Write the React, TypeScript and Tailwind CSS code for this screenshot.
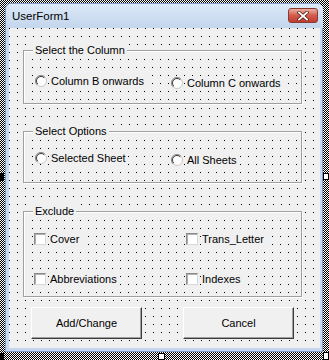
import React from "react";

const font = "font-['Liberation_Sans',Arial,sans-serif]";
const dots =
  "bg-[#f0f0f0] bg-[image:radial-gradient(circle_at_0.5px_0.5px,#000_0.8px,transparent_0.8px)] bg-[length:8px_8px]";

function Radio({ label, lower }: { label: string; lower?: boolean }) {
  return (
    <div className={`flex items-center gap-[4px] h-[14px] ${lower ? "mt-[2px]" : ""}`}>
      <svg width="12" height="12" viewBox="0 0 12 12" className="shrink-0">
        <circle cx="6" cy="6" r="5.5" fill="#fff" stroke="#c8c8c8" />
        <path d="M2.1 9.9 A5.5 5.5 0 0 1 9.9 2.1" fill="none" stroke="#8a8a8a" />
        <path d="M2.8 9.2 A4.5 4.5 0 0 1 9.2 2.8" fill="none" stroke="#3c3c3c" />
      </svg>
      <span className="text-[11px] leading-[14px] text-black bg-[#f0f0f0] pr-[2px]">{label}</span>
    </div>
  );
}

function Check({ label }: { label: string }) {
  return (
    <div className="flex items-center gap-[4px] h-[14px]">
      <div className="w-[12px] h-[12px] shrink-0 bg-white border border-[#8c8c8c] border-r-[#d8d8d8] border-b-[#d8d8d8] shadow-[inset_1px_1px_0_#b0b0b0]" />
      <span className="text-[11px] leading-[14px] text-black bg-[#f0f0f0] pr-[2px]">{label}</span>
    </div>
  );
}

function Frame({
  caption,
  className,
  children,
}: {
  caption: string;
  className: string;
  children: React.ReactNode;
}) {
  return (
    <div
      className={`relative w-[279px] border border-[#a0a0a0] shadow-[inset_1px_1px_0_#fff,1px_1px_0_#fff] ${dots} ${className}`}
    >
      <span className="absolute top-[-8px] left-[9px] px-[2px] bg-[#f0f0f0] text-[11px] leading-[14px] text-black">
        {caption}
      </span>
      {children}
    </div>
  );
}

function Button({ label }: { label: string }) {
  return (
    <button className="w-[111px] h-[32px] bg-[#f0f0f0] border border-t-white border-l-white border-r-[#3a3a3a] border-b-[#3a3a3a] shadow-[inset_-1px_-1px_0_#a0a0a0] text-[11px] text-black">
      {label}
    </button>
  );
}

export default function App() {
  return (
    <div
      className={`relative w-[329px] h-[360px] overflow-hidden pt-[3px] pl-[5px] bg-[image:repeating-conic-gradient(#000_0%_25%,#fff_0%_50%)] bg-[length:2px_2px] ${font}`}
    >
      {/* window */}
      <div className="w-[318px] h-[349px] flex flex-col rounded-t-[6px] border border-[#7f9dc4] bg-[#c4d7ee] pl-[3px] pr-[2px] pb-[3px]">
        <div className="h-[24px] shrink-0 flex items-start justify-between pr-[3px] -mx-[3px] pl-[6px] rounded-t-[5px] bg-linear-to-b from-[#dce8f6] to-[#c3d6ed]">
          <span className="mt-[4px] text-[11.5px] leading-[16px] text-black">UserForm1</span>
          <div className="mt-[4px] mr-[2px] w-[30px] h-[15px] flex items-center justify-center rounded-[3px] border border-[#8a3a30] bg-linear-to-b from-[#eab0a4] via-[#d25a4c] to-[#c23b2d]">
            <svg width="12" height="10" viewBox="0 0 12 10">
              <path d="M2 1.5 L10 8.5 M10 1.5 L2 8.5" stroke="#5a2018" strokeWidth="3.4" strokeLinecap="square" />
              <path d="M2 1.5 L10 8.5 M10 1.5 L2 8.5" stroke="#fff" strokeWidth="1.8" strokeLinecap="square" />
            </svg>
          </div>
        </div>

        {/* client area */}
        <div className={`w-[311px] h-[320px] flex flex-col pl-[14px] pt-[22px] ${dots}`}>
          <Frame caption="Select the Column" className="h-[54px] pt-[23px] pl-[11px]">
            <div className="grid grid-cols-[136px_1fr] items-start">
              <Radio label="Column B onwards" />
              <Radio label="Column C onwards" lower />
            </div>
          </Frame>

          <Frame caption="Select Options" className="mt-[27px] h-[52px] pt-[19px] pl-[11px]">
            <div className="grid grid-cols-[136px_1fr] items-start">
              <Radio label="Selected Sheet" />
              <Radio label="All Sheets" lower />
            </div>
          </Frame>

          <Frame caption="Exclude" className="mt-[28px] h-[86px] pt-[20px] pl-[10px]">
            <div className="grid grid-cols-[152px_1fr] gap-y-[26px]">
              <Check label="Cover" />
              <Check label="Trans_Letter" />
              <Check label="Abbreviations" />
              <Check label="Indexes" />
            </div>
          </Frame>

          <div className="mt-[10px] ml-[8px] flex gap-[41px]">
            <Button label="Add/Change" />
            <Button label="Cancel" />
          </div>
        </div>
      </div>

      {/* selection handles */}
      <div className="absolute left-0 top-[173px] w-[4px] h-[8px] bg-black" />
      <div className="absolute left-0 top-[353px] w-[4px] h-[7px] bg-black" />
      <div className="absolute right-0 top-[173px] w-[6px] h-[7px] bg-white border border-black" />
      <div className="absolute left-[158px] top-[353px] w-[7px] h-[7px] bg-white border border-black" />
      <div className="absolute right-0 top-[352px] w-[6px] h-[8px] bg-white border border-black" />
    </div>
  );
}
